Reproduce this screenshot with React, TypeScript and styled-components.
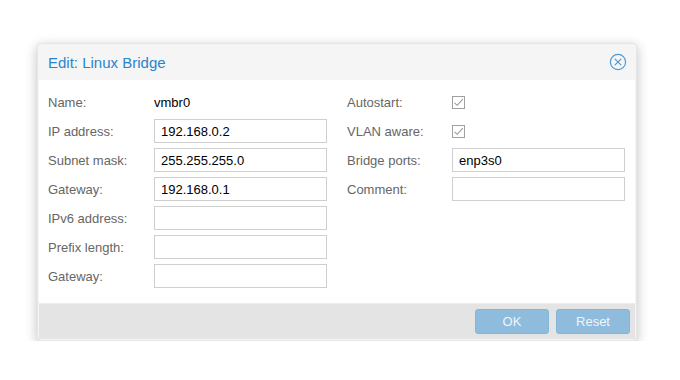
import React from "react";
import styled, { createGlobalStyle } from "styled-components";

const Global = createGlobalStyle`
  html, body { margin: 0; padding: 0; background: #ffffff; }
  body { font-family: "Liberation Sans", Arial, sans-serif; font-size: 13px; }
`;

const Page = styled.div`
  display: flex;
  align-items: flex-start;
  padding: 43px 0 0 37px;
`;

const Window = styled.div`
  width: 598px;
  display: flex;
  flex-direction: column;
  background: #f5f5f5;
  border: 1px solid #e6e6e6;
  border-radius: 4px;
  box-shadow: 0 3px 12px rgba(0, 0, 0, 0.25);
  overflow: hidden;
`;

const Header = styled.div`
  height: 36px;
  display: flex;
  align-items: center;
  justify-content: space-between;
  padding: 0 9px 0 10px;
`;

const Title = styled.div`
  color: #2a84cd;
  font-size: 15px;
  line-height: 17px;
`;

const Body = styled.div`
  background: #ffffff;
  margin: 0 1px;
  padding: 10px 8px 15px 9px;
  display: grid;
  grid-template-columns: 279px 278px;
  column-gap: 20px;
`;

const Column = styled.div`
  display: flex;
  flex-direction: column;
  gap: 5px;
`;

const Row = styled.div<{ $labelWidth: number }>`
  display: grid;
  grid-template-columns: ${(p) => p.$labelWidth}px 173px;
  align-items: center;
  height: 24px;
`;

const Label = styled.div`
  color: #666666;
  font-size: 13px;
`;

const Value = styled.div`
  color: #000000;
  font-size: 13px;
`;

const Input = styled.div`
  box-sizing: border-box;
  height: 24px;
  border: 1px solid #cfcfcf;
  padding: 0 6px;
  display: flex;
  align-items: center;
  color: #000000;
  font-size: 13px;
`;

const CheckCell = styled.div`
  display: flex;
  align-items: center;
`;

const Footer = styled.div`
  background: #e4e4e4;
  margin: 0 1px 1px;
  height: 35px;
  display: flex;
  justify-content: flex-end;
  align-items: center;
  gap: 7px;
  padding: 0 5px 0 0;
  border-top: 1px solid #ececec;
`;

const Button = styled.div`
  box-sizing: border-box;
  width: 74px;
  height: 25px;
  border-radius: 3px;
  border: 1px solid #84b6dc;
  background: #8fbcdd;
  color: #eef5fb;
  font-size: 13px;
  display: flex;
  align-items: center;
  justify-content: center;
`;

const CloseIcon = () => (
  <svg width="18" height="18" viewBox="0 0 18 18">
    <circle cx="9" cy="9" r="7.6" fill="none" stroke="#4b9ad6" strokeWidth="1.2" />
    <path d="M5.8 5.8 L12.2 12.2 M12.2 5.8 L5.8 12.2" stroke="#4b9ad6" strokeWidth="1.2" />
  </svg>
);

const Check = () => (
  <svg width="13" height="13" viewBox="0 0 13 13">
    <rect x="0.5" y="0.5" width="12" height="12" fill="#fff" stroke="#a0a0a0" />
    <path d="M2.5 6.8 L5.2 9.3 L10.8 3.2" fill="none" stroke="#999" strokeWidth="1.1" />
  </svg>
);

type Field = { label: string; value?: string; kind: "text" | "input" | "check" };

const left: Field[] = [
  { label: "Name:", value: "vmbr0", kind: "text" },
  { label: "IP address:", value: "192.168.0.2", kind: "input" },
  { label: "Subnet mask:", value: "255.255.255.0", kind: "input" },
  { label: "Gateway:", value: "192.168.0.1", kind: "input" },
  { label: "IPv6 address:", value: "", kind: "input" },
  { label: "Prefix length:", value: "", kind: "input" },
  { label: "Gateway:", value: "", kind: "input" },
];

const right: Field[] = [
  { label: "Autostart:", kind: "check" },
  { label: "VLAN aware:", kind: "check" },
  { label: "Bridge ports:", value: "enp3s0", kind: "input" },
  { label: "Comment:", value: "", kind: "input" },
];

const renderField = (f: Field, i: number, lw: number) => (
  <Row key={i} $labelWidth={lw}>
    <Label>{f.label}</Label>
    {f.kind === "text" && <Value>{f.value}</Value>}
    {f.kind === "input" && <Input>{f.value}</Input>}
    {f.kind === "check" && (
      <CheckCell>
        <Check />
      </CheckCell>
    )}
  </Row>
);

export default function App() {
  return (
    <>
      <Global />
      <Page>
        <Window>
          <Header>
            <Title>Edit: Linux Bridge</Title>
            <CloseIcon />
          </Header>
          <Body>
            <Column>{left.map((f, i) => renderField(f, i, 106))}</Column>
            <Column>{right.map((f, i) => renderField(f, i, 105))}</Column>
          </Body>
          <Footer>
            <Button>OK</Button>
            <Button>Reset</Button>
          </Footer>
        </Window>
      </Page>
    </>
  );
}
